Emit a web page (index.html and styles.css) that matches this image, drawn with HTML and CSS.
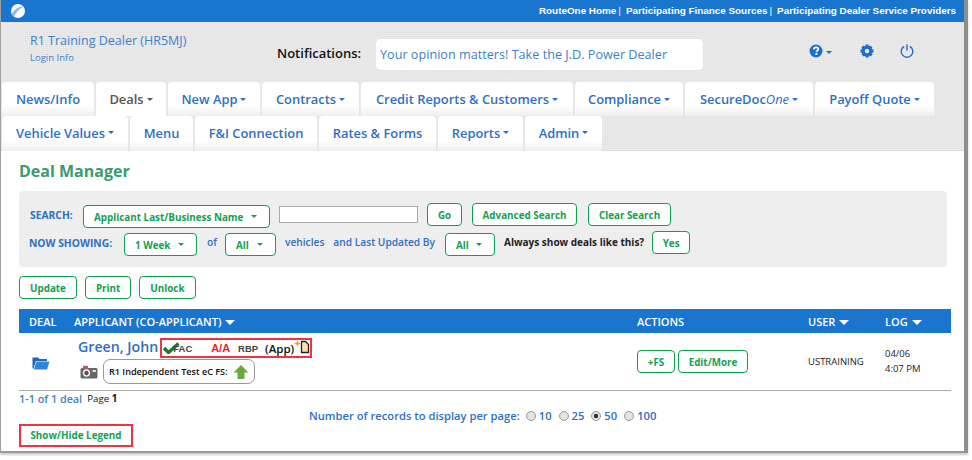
FILE: index.html
```html
<!DOCTYPE html>
<html lang="en">
<head>
  <meta charset="UTF-8">
  <title>Deal Manager</title>
  <link rel="stylesheet" href="styles.css">
</head>
<body>
  <div class="window">
    <div class="topbar">
      <svg class="logo" width="16" height="16" viewBox="0 0 16 16">
        <circle cx="8" cy="8" r="7" fill="#fff"/>
        <path d="M1.5 11.5C4 7 8 3.5 14 3.2C10 5 6.5 8.5 4 13.5Z" fill="#8db9e6"/>
      </svg>
      <div class="toplinks">
        <a>RouteOne Home</a><span>|</span>
        <a>Participating Finance Sources</a><span>|</span>
        <a>Participating Dealer Service Providers</a>
      </div>
    </div>

    <header class="masthead">
      <div class="info-row">
        <div class="dealer">
          <div class="dealer-name">R1 Training Dealer (HR5MJ)</div>
          <div class="login-info">Login Info</div>
        </div>
        <div class="notify-label">Notifications:</div>
        <div class="notify-box">Your opinion matters! Take the J.D. Power Dealer</div>
        <div class="util-icons">
          <span class="help">
            <svg width="14" height="14" viewBox="0 0 14 14">
              <circle cx="7" cy="7" r="6.5" fill="#1c6fc9"/>
              <path d="M4.8 5.4C4.9 4 5.9 3.4 7.1 3.4C8.4 3.4 9.3 4.2 9.3 5.2C9.3 6.6 7.4 6.6 7.4 8" fill="none" stroke="#fff" stroke-width="1.7"/>
              <rect x="6.4" y="9" width="2" height="1.9" fill="#fff"/>
            </svg>
            <i class="caret"></i>
          </span>
          <svg class="gear" width="14" height="14" viewBox="0 0 14 14">
            <path d="M5.6 0.5H8.4L8.8 2.3L10.4 1.4L12.5 3.5L11.6 5.1L13.5 5.6V8.4L11.7 8.8L12.6 10.4L10.5 12.5L8.9 11.6L8.4 13.5H5.6L5.2 11.7L3.6 12.6L1.5 10.5L2.4 8.9L0.5 8.4V5.6L2.3 5.2L1.4 3.6L3.5 1.5L5.1 2.4Z" fill="#1c6fc9"/>
            <circle cx="7" cy="7" r="2.2" fill="#e8e8e8"/>
          </svg>
          <svg class="power" width="14" height="14" viewBox="0 0 14 14">
            <path d="M4.2 2.4A5.8 5.8 0 1 0 9.8 2.4" fill="none" stroke="#1c6fc9" stroke-width="1.4"/>
            <path d="M7 0.5V6.5" stroke="#1c6fc9" stroke-width="1.4"/>
          </svg>
        </div>
      </div>
      <nav class="tabs">
        <a class="tab w92">News/Info</a>
        <a class="tab active w70">Deals<i class="caret"></i></a>
        <a class="tab w92">New App<i class="caret"></i></a>
        <a class="tab w97">Contracts<i class="caret"></i></a>
        <a class="tab w212">Credit Reports &amp; Customers<i class="caret"></i></a>
        <a class="tab w108">Compliance<i class="caret"></i></a>
        <a class="tab w128">SecureDoc<em>One</em><i class="caret"></i></a>
        <a class="tab w119">Payoff Quote<i class="caret"></i></a>
      </nav>
      <nav class="tabs second">
        <a class="tab w126">Vehicle Values<i class="caret"></i></a>
        <a class="tab w63">Menu</a>
        <a class="tab w122">F&amp;I Connection</a>
        <a class="tab w117">Rates &amp; Forms</a>
        <a class="tab w85">Reports<i class="caret"></i></a>
        <a class="tab w77">Admin<i class="caret"></i></a>
      </nav>
    </header>

    <main class="content">
      <h1>Deal Manager</h1>

      <section class="search-panel">
        <div class="search-row first">
          <span class="lbl lbl-search">SEARCH:</span>
          <button class="btn select sel-name">Applicant Last/Business Name<i class="caret"></i></button>
          <input class="search-input" type="text">
          <button class="btn go">Go</button>
          <button class="btn adv">Advanced Search</button>
          <button class="btn clear">Clear Search</button>
        </div>
        <div class="search-row">
          <span class="lbl lbl-showing">NOW SHOWING:</span>
          <button class="btn select sel-week">1 Week<i class="caret"></i></button>
          <span class="small-lbl of">of</span>
          <button class="btn select sel-all">All<i class="caret"></i></button>
          <span class="small-lbl veh">vehicles</span>
          <span class="small-lbl upd">and Last Updated By</span>
          <button class="btn select sel-by">All<i class="caret"></i></button>
          <span class="always">Always show deals like this?</span>
          <button class="btn yes">Yes</button>
        </div>
      </section>

      <div class="actions-row">
        <button class="btn">Update</button>
        <button class="btn">Print</button>
        <button class="btn">Unlock</button>
      </div>

      <div class="grid-head">
        <span>DEAL</span>
        <span>APPLICANT (CO-APPLICANT)<i class="sort"></i></span>
        <span>ACTIONS</span>
        <span>USER<i class="sort"></i></span>
        <span>LOG<i class="sort"></i></span>
      </div>
      <div class="grid-row">
        <div class="deal-cell">
          <svg width="18" height="14" viewBox="0 0 18 14">
            <path d="M0.5 1.5H6L7.5 3H15V5H4L1.5 12.5H0.5Z" fill="#1a68b8"/>
            <path d="M4.5 5.5H17.5L15 13.5H1.8Z" fill="#2f86d8"/>
          </svg>
        </div>
        <div class="applicant-cell">
          <div class="name-line">
            <a class="applicant">Green, John</a>
            <div class="flags">
              <svg class="check" width="17" height="12" viewBox="0 0 17 12">
                <path d="M1 6L5.5 10.5L15.5 1.5" fill="none" stroke="#1d7a2c" stroke-width="3.4"/>
              </svg>
              <span class="flag fac">FAC</span>
              <span class="flag aa">A/A</span>
              <span class="flag rbp">RBP</span>
              <span class="app">(App)</span>
              <svg class="doc" width="16" height="14" viewBox="0 0 16 14">
                <path d="M3.5 0L4.5 2.5L7 3.5L4.5 4.5L3.5 7L2.5 4.5L0 3.5L2.5 2.5Z" fill="#f7a01a"/>
                <path d="M7.5 1.5H11.5L14.5 4.5V12.5H7.5Z" fill="#fbe3b0" stroke="#222" stroke-width="1.3"/>
              </svg>
            </div>
          </div>
          <div class="fs-line">
            <svg width="18" height="14" viewBox="0 0 18 14">
              <rect x="0.5" y="3" width="17" height="10.5" rx="1.5" fill="#666"/>
              <rect x="3" y="0.8" width="5" height="3" fill="#c9545a"/>
              <circle cx="6.5" cy="8" r="3.7" fill="#eee"/>
              <circle cx="6.5" cy="8" r="2.2" fill="#555"/>
              <rect x="12.5" y="5" width="3.5" height="2" fill="#ddd"/>
            </svg>
            <div class="fs-pill">
              <span>R1 Independent Test eC FS:</span>
              <svg width="16" height="16" viewBox="0 0 16 16">
                <path d="M8 1L15.5 8.5H11.5V15H4.5V8.5H0.5Z" fill="#6aa83e"/>
              </svg>
            </div>
          </div>
        </div>
        <div class="action-cell">
          <button class="btn fs-btn">+FS</button>
          <button class="btn edit-btn">Edit/More</button>
        </div>
        <div class="user-cell">USTRAINING</div>
        <div class="log-cell">04/06<br>4:07 PM</div>
      </div>

      <div class="pager">
        <div class="pager-count"><a>1-1 of 1 deal</a><span>Page <b>1</b></span></div>
        <div class="per-page">
          <span class="per-page-label">Number of records to display per page:</span>
          <label><i class="radio"></i>10</label>
          <label><i class="radio"></i>25</label>
          <label><i class="radio on"></i>50</label>
          <label><i class="radio"></i>100</label>
        </div>
        <a class="legend">Show/Hide Legend</a>
      </div>
    </main>
  </div>
</body>
</html>
```

FILE: styles.css
```css
* {
  box-sizing: border-box;
}
html, body {
  margin: 0;
  padding: 0;
  background: #fff;
}
body {
  font-family: "Open Sans", "Liberation Sans", sans-serif;
  color: #111;
  height: 460px;
  overflow: hidden;
}
.window {
  width: 968px;
  height: 453px;
  border-left: 1px solid #a0a0a0;
  border-right: 4px solid #8e8e8e;
  border-bottom: 2px solid #999;
  box-shadow: 0 2px 2px #ccc;
  overflow: hidden;
}

/* top bar */
.topbar {
  height: 22px;
  background: #1a75cf;
  display: flex;
  align-items: center;
  justify-content: space-between;
  padding: 0 8px 0 9px;
}
.logo {
  flex: none;
}
.toplinks {
  font-family: "Liberation Sans", Arial, sans-serif;
  font-size: 9.9px;
  font-weight: bold;
  color: #fff;
  display: flex;
  gap: 2px;
  margin-top: -2px;
}
.toplinks span {
  font-weight: normal;
  margin-right: 3px;
}

/* header */
.masthead {
  height: 129px;
  padding: 0 0 0 1px;
  background-color: #e6e6e6;
  background-image:
    repeating-linear-gradient(0deg, rgba(255,255,255,.25) 0 1px, transparent 1px 2px),
    repeating-linear-gradient(90deg, rgba(0,0,0,.02) 0 1px, transparent 1px 2px);
  border-bottom: 1px solid #ddd;
}
.info-row {
  height: 60px;
  display: flex;
  align-items: flex-start;
}
.dealer {
  width: 275px;
  padding: 10px 0 0 28px;
  color: #3d7fc6;
}
.dealer-name {
  font-size: 12.5px;
  line-height: 18px;
}
.login-info {
  font-size: 9.5px;
  line-height: 14px;
  margin-top: 1px;
}
.notify-label {
  width: 99px;
  margin-top: 21px;
  font-size: 13px;
  font-weight: 600;
  line-height: 20px;
  color: #111;
}
.notify-box {
  width: 327px;
  height: 31px;
  margin-top: 17px;
  padding: 0 4px;
  background: #fff;
  border-radius: 5px;
  font-size: 12.65px;
  line-height: 30px;
  color: #3d7fc6;
  white-space: nowrap;
  overflow: hidden;
}
.util-icons {
  display: flex;
  align-items: center;
  margin: 22px 0 0 106px;
}
.help {
  display: flex;
  align-items: center;
}
.help .caret {
  margin-left: 3px;
  margin-top: 2px;
  color: #1c6fc9;
}
.gear {
  margin-left: 28px;
}
.power {
  margin-left: 26px;
}

/* tabs */
.tabs {
  display: flex;
  gap: 2px;
  height: 34px;
}
.tabs.second {
  height: 35px;
}
.tabs.second .tab {
  padding-bottom: 2px;
}
.tab {
  display: flex;
  align-items: center;
  justify-content: center;
  background: linear-gradient(#fff 0, #fff 70%, #eee 100%);
  border-radius: 4px 4px 0 0;
  color: #2e6fc4;
  font-size: 12.9px;
  font-weight: 600;
  white-space: nowrap;
}
.tab.active {
  background: #fff;
  color: #555;
}
.tab em {
  font-weight: 500;
}
.caret {
  display: inline-block;
  width: 0;
  height: 0;
  margin-left: 3px;
  border-left: 3.5px solid transparent;
  border-right: 3.5px solid transparent;
  border-top: 3px solid currentColor;
  vertical-align: middle;
}
.w70 { width: 70px; }
.w63 { width: 63px; }
.w77 { width: 77px; }
.w85 { width: 85px; }
.w92 { width: 92px; }
.w97 { width: 97px; }
.w108 { width: 108px; }
.w117 { width: 117px; }
.w119 { width: 119px; }
.w122 { width: 122px; }
.w126 { width: 126px; }
.w128 { width: 128px; }
.w212 { width: 212px; }

/* content */
.content {
  padding: 0 0 0 18px;
}
h1 {
  margin: 9px 0 0;
  font-size: 16px;
  line-height: 22px;
  font-weight: 700;
  color: #3a9a70;
}
.btn {
  height: 23px;
  padding: 0 10px;
  font-family: inherit;
  font-size: 9.85px;
  font-weight: 700;
  color: #14a052;
  background: #fff;
  border: 1px solid #0fa04f;
  border-radius: 4px;
  white-space: nowrap;
}
.select {
  display: flex;
  align-items: center;
  justify-content: space-between;
  color: #14a052;
}
.select .caret {
  color: #14a052;
  margin-right: 2px;
}
.search-panel {
  width: 928px;
  height: 76px;
  margin-top: 9px;
  padding: 12px 10px 0 10px;
  background: #eee;
  border-radius: 4px;
}
.search-row {
  display: flex;
  align-items: flex-start;
  height: 28px;
}
.search-row.first {
  height: 29px;
}
.lbl {
  font-size: 10.3px;
  font-weight: 700;
  line-height: 23px;
  color: #2e6fc4;
}
.lbl-search {
  width: 54px;
  padding-left: 1px;
  line-height: 25px;
}
.lbl-showing {
  width: 95px;
}
.sel-name {
  width: 187px;
  margin-top: 2px;
}
.search-input {
  width: 139px;
  height: 17px;
  margin: 3px 0 0 9px;
  background: #fff;
  border: 1px solid #aaa;
}
.go {
  width: 35px;
  margin-left: 9px;
  padding: 0;
}
.adv {
  width: 105px;
  margin-left: 10px;
  padding: 0;
}
.clear {
  width: 83px;
  margin-left: 11px;
  padding: 0;
}
.sel-week {
  width: 73px;
  margin-top: 1px;
}
.small-lbl {
  font-size: 10.2px;
  font-weight: 600;
  line-height: 21px;
  color: #2e6fc4;
}
.of {
  margin-left: 10px;
  width: 18px;
}
.sel-all {
  width: 51px;
  margin-top: 1px;
}
.veh {
  margin-left: 9px;
}
.upd {
  margin-left: 9px;
}
.sel-by {
  width: 50px;
  margin: 1px 0 0 10px;
}
.always {
  margin-left: 9px;
  font-size: 10px;
  font-weight: 700;
  line-height: 21px;
  color: #222;
}
.yes {
  width: 38px;
  margin: -1px 0 0 8px;
  padding: 0;
}
.actions-row {
  display: flex;
  gap: 8px;
  margin-top: 9px;
  height: 23px;
}

/* grid */
.grid-head,
.grid-row {
  width: 932px;
  display: grid;
  grid-template-columns: 55px 563px 171px 77px 1fr;
}
.grid-head {
  height: 24px;
  margin-top: 10px;
  padding-left: 10px;
  grid-template-columns: 45px 563px 171px 77px 1fr;
  align-items: center;
  background: #1a75cf;
  color: #fff;
  font-size: 11px;
  font-weight: 600;
}
.sort {
  display: inline-block;
  margin-left: 4px;
  border-left: 5px solid transparent;
  border-right: 5px solid transparent;
  border-top: 5px solid #fff;
  vertical-align: 1px;
}
.grid-row {
  height: 58px;
  border-bottom: 1px solid #aaa;
}
.deal-cell {
  padding: 20px 0 0 13px;
}
.applicant-cell {
  padding: 5px 0 0 4px;
}
.name-line {
  display: flex;
  align-items: center;
  height: 20px;
}
.applicant {
  margin-top: -3px;
  font-size: 14.2px;
  font-weight: 600;
  color: #2e6fc4;
}
.flags {
  display: flex;
  align-items: center;
  width: 152px;
  height: 20px;
  margin-left: 2px;
  padding-left: 1px;
  border: 2px solid #ef3340;
}
.check {
  flex: none;
}
.flag {
  font-family: "Liberation Sans", Arial, sans-serif;
  font-size: 9.5px;
  font-weight: bold;
  color: #444;
}
.fac {
  margin-left: -8px;
  width: 39px;
  padding-left: 1px;
}
.aa {
  color: #ee1c25;
  font-size: 11px;
  width: 27px;
}
.rbp {
  width: 27px;
}
.app {
  font-size: 11.5px;
  font-weight: 600;
  color: #111;
}
.doc {
  flex: none;
  margin-top: -3px;
}
.fs-line {
  display: flex;
  align-items: center;
  gap: 5px;
  margin-top: 1px;
  padding-left: 2px;
}
.fs-pill {
  display: flex;
  align-items: center;
  justify-content: space-between;
  width: 152px;
  height: 25px;
  padding: 0 5px;
  border: 1px solid #999;
  border-radius: 7px;
  font-size: 9.1px;
  font-weight: 600;
  color: #111;
  white-space: nowrap;
}
.action-cell {
  display: flex;
  gap: 3px;
  padding-top: 17px;
}
.action-cell .btn {
  padding: 0;
}
.fs-btn {
  width: 38px;
}
.edit-btn {
  width: 70px;
}
.user-cell {
  padding-top: 22px;
  font-size: 9.5px;
  color: #222;
}
.log-cell {
  padding-top: 13px;
  font-size: 9.5px;
  line-height: 15px;
  color: #222;
}

/* pager */
.pager {
  width: 932px;
  font-size: 10px;
}
.pager-count {
  display: flex;
  gap: 5px;
  height: 16px;
  padding-top: 1px;
  line-height: 14px;
}
.pager-count a {
  font-size: 10.8px;
  font-weight: 600;
  color: #3d7fc6;
}
.pager-count span {
  font-size: 9.8px;
  color: #111;
}
.per-page {
  display: flex;
  align-items: center;
  height: 17px;
  padding-left: 290px;
  color: #2e6fc4;
  font-size: 11.2px;
  font-weight: 600;
}
.per-page-label {
  margin-right: -1px;
}
.per-page label {
  display: flex;
  align-items: center;
  margin-left: 7px;
}
.radio {
  display: inline-block;
  width: 10px;
  height: 10px;
  margin-right: 3px;
  border: 1px solid #999;
  border-radius: 50%;
  background: #e4e4e4;
}
.radio.on {
  background: radial-gradient(#333 0 2px, #e4e4e4 2.5px);
}
.legend {
  display: block;
  width: 114px;
  height: 23px;
  border: 2px solid #ef3340;
  font-size: 9.85px;
  font-weight: 700;
  line-height: 19px;
  text-align: center;
  color: #14a052;
}
```
